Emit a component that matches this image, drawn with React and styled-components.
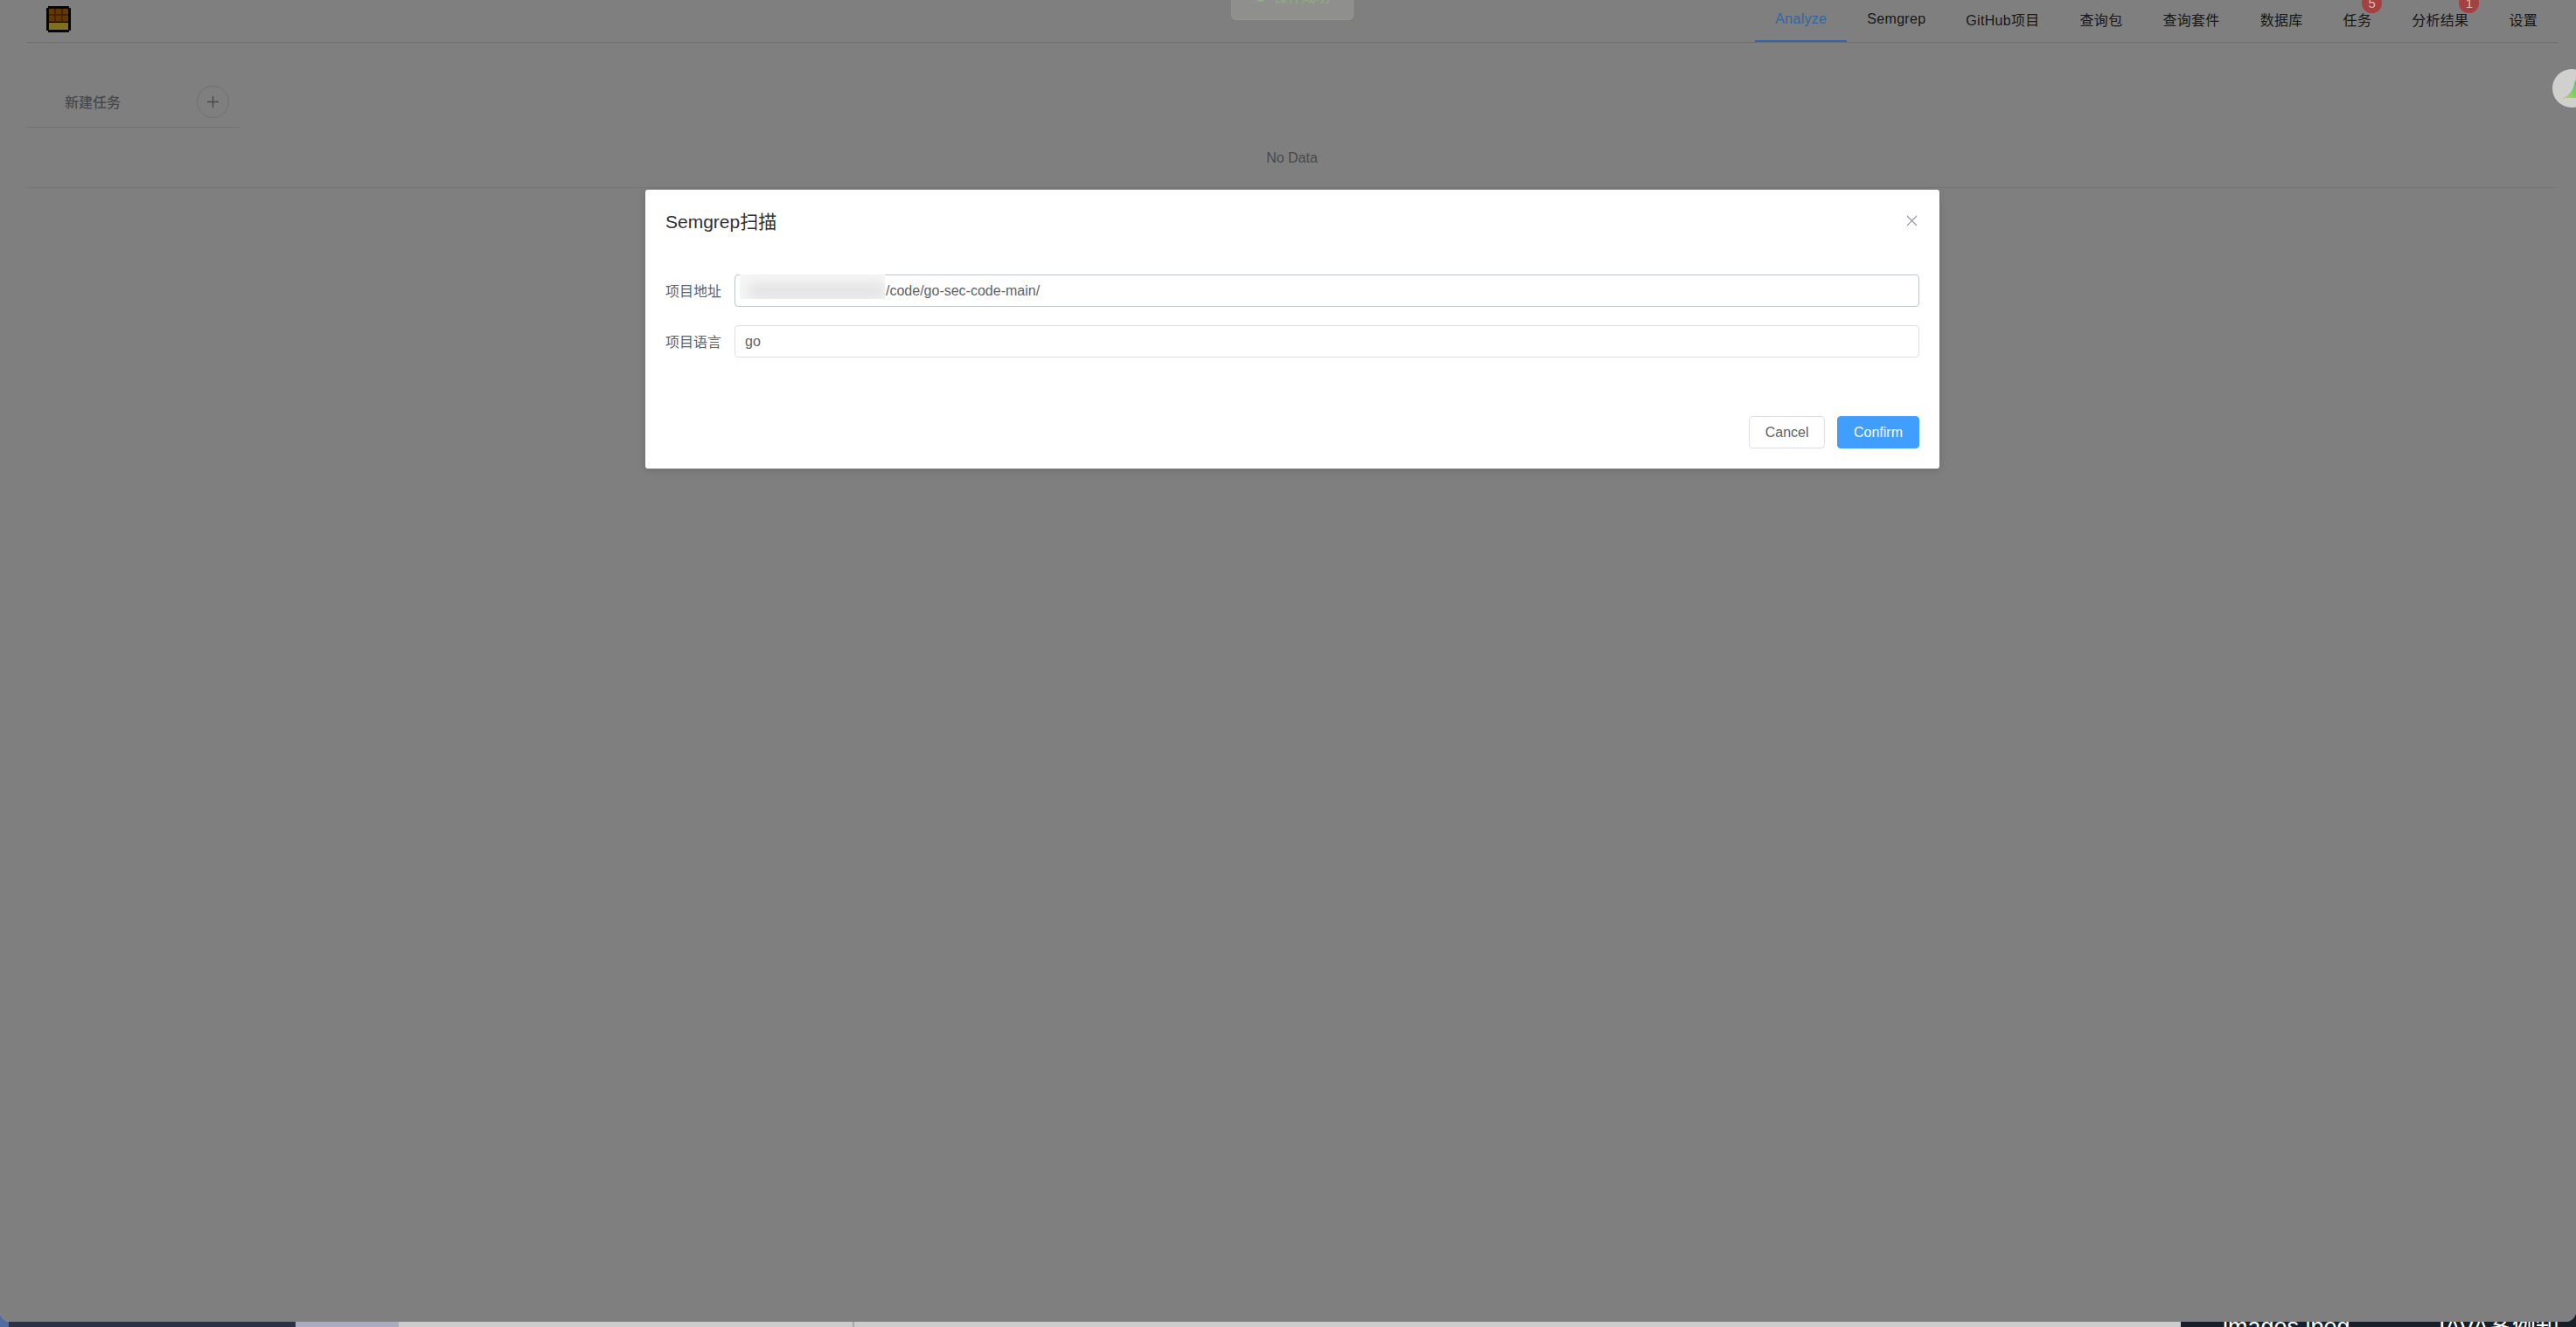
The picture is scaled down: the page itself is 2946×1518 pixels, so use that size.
import styled, { createGlobalStyle } from "styled-components";

const GlobalStyle = createGlobalStyle`
  html, body {
    margin: 0;
    padding: 0;
    height: 1518px;
    overflow: hidden;
  }

  body {
    font-family: "Liberation Sans", "Noto Sans CJK SC", sans-serif;
    font-size: 16px;
  }
`;

// 바탕화면 (창 뒤로 보이는 부분)
const Desktop = styled.div`
  width: 2946px;
  height: 1518px;
  display: flex;
  flex-direction: column;
  overflow: hidden;
  background: linear-gradient(90deg, #4f6d9e 0 40px, #16202a 40px);
`;

const BrowserWindow = styled.div`
  position: relative;
  flex: 0 0 1512px;
  overflow: hidden;
  background: #ffffff;
  border-radius: 0 0 12px 12px;
`;

const Dock = styled.div`
  flex: 1;
  display: flex;
  overflow: hidden;
`;

const DockPart = styled.div`
  flex: ${(props) => (props.$width ? `0 0 ${props.$width}px` : "1")};
  background: ${(props) => props.$color};
`;

const DockFiles = styled.div`
  flex: 1;
  display: flex;
  padding-left: 48px;
  gap: 95px;
  background: #16202a;
`;

const DockLabel = styled.div`
  margin-top: -10px;
  color: #ffffff;
  font-size: 27px;
  line-height: 32px;
  white-space: nowrap;
`;

// 상단 메뉴
const Header = styled.header`
  height: 48px;
  margin: 0 21px 0 30px;
  display: flex;
  align-items: stretch;
  justify-content: space-between;
  border-bottom: 1px solid #dcdfe6;
`;

const Logo = styled.svg`
  width: 28px;
  height: 30px;
  margin: 7px 0 0 23px;
`;

const Nav = styled.nav`
  display: flex;
`;

// 활성 탭과 배지는 레이어 위에서 원본의 밝기를 유지
const NavItem = styled.div`
  position: relative;
  z-index: ${(props) => (props.$active ? 1 : "auto")};
  height: 44px;
  padding: 0 23px 2px;
  display: flex;
  align-items: center;
  letter-spacing: 0.3px;
  color: ${(props) => (props.$active ? "#2f66a5" : "#303133")};
  border-bottom: 2px solid ${(props) => (props.$active ? "#2a65ad" : "transparent")};
  white-space: nowrap;
`;

const Badge = styled.span`
  position: absolute;
  z-index: 1;
  top: -8px;
  right: 11px;
  width: 23px;
  height: 23px;
  border-radius: 50%;
  background: #a44040;
  color: #d9b8b8;
  font-size: 15px;
  line-height: 23px;
  letter-spacing: 0;
  text-align: center;
`;

const Toast = styled.div`
  position: absolute;
  top: -32px;
  left: 1408px;
  width: 140px;
  height: 55px;
  box-sizing: border-box;
  padding-bottom: 2px;
  display: flex;
  align-items: center;
  justify-content: center;
  gap: 8px;
  background: rgba(240, 249, 235, 0.14);
  border: 1px solid rgba(225, 243, 216, 0.08);
  border-radius: 6px;
  color: #8fae7e;
`;

const ToastDot = styled.span`
  width: 14px;
  height: 14px;
  border-radius: 50%;
  background: #8fae7e;
`;

// 작업 탭
const Content = styled.main`
  margin: 0 21px 0 30px;
`;

const TabRow = styled.div`
  width: 245px;
  height: 97px;
  box-sizing: border-box;
  padding: 49px 13px 0 44px;
  display: flex;
  align-items: flex-start;
  justify-content: space-between;
  border-bottom: 1px solid #e4e7ed;
`;

const TabLabel = styled.div`
  margin-top: 9px;
  line-height: 22px;
  color: #909399;
  font-weight: 500;
`;

const AddButton = styled.div`
  width: 37px;
  height: 37px;
  box-sizing: border-box;
  display: flex;
  align-items: center;
  justify-content: center;
  border: 1px solid #dcdfe6;
  border-radius: 50%;
  color: #909399;
`;

const Empty = styled.div`
  height: 69px;
  padding-top: 1px;
  box-sizing: border-box;
  display: flex;
  align-items: center;
  justify-content: center;
  color: #909399;
  border-bottom: 1px solid #ebeef5;
`;

// 모달 배경 레이어
const BackLayer = styled.div`
  position: absolute;
  inset: 0;
  padding: 217px 0 0 10px;
  display: flex;
  justify-content: center;
  align-items: flex-start;
  background: rgba(0, 0, 0, 0.5);
`;

const Dialog = styled.div`
  width: 1480px;
  height: 319px;
  box-sizing: border-box;
  padding: 0 23px 23px;
  display: flex;
  flex-direction: column;
  background: #ffffff;
  border-radius: 3px;
  box-shadow: 0 2px 8px rgba(0, 0, 0, 0.15);
`;

const DialogHeader = styled.div`
  height: 70px;
  margin-bottom: 27px;
  display: flex;
  align-items: center;
  justify-content: space-between;
`;

const DialogTitle = styled.div`
  font-size: 21px;
  color: #303133;
`;

const CloseIcon = styled.svg`
  width: 13px;
  height: 13px;
  margin-right: 2px;
  color: #909399;
`;

const FormRow = styled.div`
  display: flex;
  align-items: center;
  margin-bottom: 21px;
`;

const FormLabel = styled.div`
  width: 79px;
  padding-bottom: 2px;
  color: #606266;
`;

const InputBox = styled.div`
  position: relative;
  flex: 1;
  height: 37px;
  box-sizing: border-box;
  padding-left: ${(props) => (props.$masked ? "172px" : "11px")};
  display: flex;
  align-items: center;
  color: #606266;
  border: 1px solid ${(props) => (props.$hover ? "#c0c4cc" : "#dcdfe6")};
  border-radius: 4px;
`;

// 가려진 경로
const Redacted = styled.div`
  position: absolute;
  top: -1px;
  left: 5px;
  width: 166px;
  height: 28px;
  overflow: hidden;
  background: #f6f6f6;

  &::before {
    content: "";
    position: absolute;
    left: 10px;
    right: 0;
    top: 12px;
    height: 14px;
    background: #dcdcdc;
    filter: blur(8px);
  }
`;

const DialogFooter = styled.div`
  margin-top: auto;
  display: flex;
  justify-content: flex-end;
  gap: 14px;
`;

const FooterButton = styled.div`
  height: 37px;
  box-sizing: border-box;
  padding: 0 ${(props) => (props.$primary ? "18px" : "17.5px")};
  display: flex;
  align-items: center;
  color: ${(props) => (props.$primary ? "#ffffff" : "#606266")};
  background: ${(props) => (props.$primary ? "#409eff" : "#ffffff")};
  border: 1px solid ${(props) => (props.$primary ? "#409eff" : "#dcdfe6")};
  border-radius: 4px;
`;

// 오른쪽 확장 프로그램 버튼
const SideWidget = styled.div`
  position: absolute;
  top: 79px;
  left: 2919px;
  width: 44px;
  height: 44px;
  border-radius: 50%;
  background: #d0d1ce;
  overflow: hidden;
`;

const navItems = [
  { label: "Analyze", active: true },
  { label: "Semgrep" },
  { label: "GitHub项目" },
  { label: "查询包" },
  { label: "查询套件" },
  { label: "数据库" },
  { label: "任务", badge: 5 },
  { label: "分析结果", badge: 1 },
  { label: "设置" },
];

function ChocolateLogo() {
  const cells = [0, 1, 2];
  return (
    <Logo viewBox="0 0 28 30">
      <path d="M2 0h24v2h2v26h-2v2H2v-2H0V2h2z" fill="#0a0a0a" />
      <rect x="3" y="3" width="22" height="15" fill="#8a4a00" />
      {cells.map((i) => (
        <rect key={`a${i}`} x={3 + i * 8} y="3" width="6" height="6" fill="#c46e00" />
      ))}
      {cells.map((i) => (
        <rect key={`b${i}`} x={3 + i * 8} y="11" width="6" height="6" fill="#c46e00" />
      ))}
      <rect x="3" y="19" width="22" height="8" fill="#ffe040" />
    </Logo>
  );
}

export default function App() {
  return (
    <Desktop>
      <GlobalStyle />
      <BrowserWindow>
        <Header>
          <ChocolateLogo />
          <Nav>
            {navItems.map((item) => (
              <NavItem key={item.label} $active={item.active}>
                {item.label}
                {item.badge && <Badge>{item.badge}</Badge>}
              </NavItem>
            ))}
          </Nav>
        </Header>
        <Content>
          <TabRow>
            <TabLabel>新建任务</TabLabel>
            <AddButton>
              <svg width="15" height="15" viewBox="0 0 15 15" stroke="currentColor" strokeWidth="1.4">
                <path d="M7.5 1v13M1 7.5h13" />
              </svg>
            </AddButton>
          </TabRow>
          <Empty>No Data</Empty>
        </Content>
        <BackLayer>
          <Dialog>
            <DialogHeader>
              <DialogTitle>Semgrep扫描</DialogTitle>
              <CloseIcon viewBox="0 0 13 13" stroke="currentColor" strokeWidth="1.1">
                <path d="M1 1l11 11M12 1L1 12" />
              </CloseIcon>
            </DialogHeader>
            <FormRow>
              <FormLabel>项目地址</FormLabel>
              <InputBox $hover $masked>
                <Redacted />
                /code/go-sec-code-main/
              </InputBox>
            </FormRow>
            <FormRow>
              <FormLabel>项目语言</FormLabel>
              <InputBox>go</InputBox>
            </FormRow>
            <DialogFooter>
              <FooterButton>Cancel</FooterButton>
              <FooterButton $primary>Confirm</FooterButton>
            </DialogFooter>
          </Dialog>
        </BackLayer>
        <Toast>
          <ToastDot />
          操作成功
        </Toast>
        <SideWidget>
          <svg width="44" height="44" viewBox="0 0 44 44">
            <defs>
              <linearGradient id="leaf" x1="0" y1="1" x2="1" y2="0">
                <stop offset="0" stopColor="#b4d85a" />
                <stop offset="1" stopColor="#3ec46d" />
              </linearGradient>
            </defs>
            <path d="M12 33c6-2 9-6 12-12l2-8h6v20H16c-2 1-4 1-4 0z" fill="url(#leaf)" />
          </svg>
        </SideWidget>
      </BrowserWindow>
      <Dock>
        <DockPart $width={10} $color="#4f6d9e" />
        <DockPart $width={328} $color="#2a3344" />
        <DockPart $width={118} $color="#a9acbd" />
        <DockPart $width={519} $color="#cccccc" />
        <DockPart $width={2} $color="#a8a8a8" />
        <DockPart $width={1517} $color="#cccccc" />
        <DockFiles>
          <DockLabel>images.jpeg</DockLabel>
          <DockLabel>JAVA案例知</DockLabel>
        </DockFiles>
      </Dock>
    </Desktop>
  );
}
